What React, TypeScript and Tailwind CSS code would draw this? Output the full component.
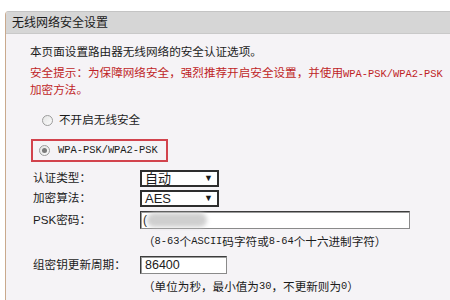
import React from 'react';

const cjk = { fontFamily: '"Liberation Sans", "Noto Sans CJK SC", sans-serif' };

function Ascii({ children }: { children: React.ReactNode }) {
  return <span className="font-['Liberation_Mono',monospace] text-[10.4px]">{children}</span>;
}

function Radio({ checked }: { checked?: boolean }) {
  return (
    <span className="flex h-[11px] w-[11px] items-center justify-center rounded-full border border-[#9c9c9c] bg-gradient-to-br from-[#e4e4e4] to-[#fbfbfb]">
      {checked && <span className="h-[5px] w-[5px] rounded-full bg-[#7a7a7a]" />}
    </span>
  );
}

function Select({ value }: { value: string }) {
  return (
    <div className="flex h-[17px] w-[79px] items-center justify-between border-2 border-[#2e2e2e] bg-white pl-[3px] pr-[4px] text-[13px] leading-none">
      <span>{value}</span>
      <span className="text-[9px]">▼</span>
    </div>
  );
}

function Row({ label, children, className }: { label: string; children: React.ReactNode; className?: string }) {
  return (
    <div className={`flex h-[20px] items-center ${className ?? ''}`}>
      <div className="w-[110px] pl-[3px]">{label}</div>
      {children}
    </div>
  );
}

export default function App() {
  return (
    <div style={cjk} className="h-[300px] w-[450px] overflow-hidden bg-white pt-[11px] text-[11.6px] text-[#1b1b1b]">
      <div className="ml-[5px] h-full overflow-hidden rounded-tl-[4px] border-l border-[#c9a98d] bg-[#f5f3f6]">
        <div className="flex h-[23px] items-center border-t border-[#c4c4c4] border-b border-b-[#c9c9c9] bg-[#d6d6d6] pl-[6px] text-[12px]">
          无线网络安全设置
        </div>

        <div className="pl-[24px] pt-[10px]">
          <p className="whitespace-nowrap leading-[16px]">本页面设置路由器无线网络的安全认证选项。</p>
          <p className="mt-[5px] whitespace-nowrap leading-[16px] text-[#bf1f27]">
            安全提示：为保障网络安全，强烈推荐开启安全设置，并使用<Ascii>WPA-PSK/WPA2-PSK</Ascii>
            <br />
            加密方法。
          </p>

          <div className="mt-[13px] flex h-[18px] items-center gap-[6px] pl-[12px]">
            <Radio />
            <span>不开启无线安全</span>
          </div>

          <div className="ml-[1px] mt-[10px] flex h-[23px] w-[137px] items-center gap-[8px] border-2 border-[#d2434d] pl-[6px]">
            <Radio checked />
            <Ascii>WPA-PSK/WPA2-PSK</Ascii>
          </div>

          <Row label="认证类型：" className="mt-[6px]">
            <Select value="自动" />
          </Row>
          <Row label="加密算法：">
            <div className="font-['Liberation_Sans',sans-serif]">
              <Select value="AES" />
            </div>
          </Row>
          <Row label="PSK密码：" className="mt-[2px]">
            <div className="relative flex h-[18px] w-[270px] items-center border border-[#3c3c3c] border-b-[#8a8a8a] border-r-[#8a8a8a] bg-white pl-[2px] shadow-[inset_1px_1px_0_#9a9a9a]">
              <span className="text-[12px]">(</span>
              <span className="absolute left-[6px] top-[1px] h-[14px] w-[60px] rounded-full bg-[#cfcfcf] blur-[2px]" />
            </div>
          </Row>
          <div className="mt-[2px] flex h-[20px] items-center whitespace-nowrap pl-[113px]">
            （<Ascii>8-63</Ascii>个<Ascii>ASCII</Ascii>码字符或<Ascii>8-64</Ascii>个十六进制字符）
          </div>
          <Row label="组密钥更新周期：" className="mt-[3px]">
            <div className="flex h-[18px] w-[87px] items-center border border-[#3c3c3c] border-b-[#8a8a8a] border-r-[#8a8a8a] bg-white pl-[4px] font-['Liberation_Sans',sans-serif] text-[12.5px] shadow-[inset_1px_1px_0_#9a9a9a]">
              86400
            </div>
          </Row>
          <div className="mt-[2px] flex h-[20px] items-center whitespace-nowrap pl-[113px]">
            （单位为秒，最小值为<Ascii>30</Ascii>，不更新则为<Ascii>0</Ascii>）
          </div>
        </div>
      </div>
    </div>
  );
}
